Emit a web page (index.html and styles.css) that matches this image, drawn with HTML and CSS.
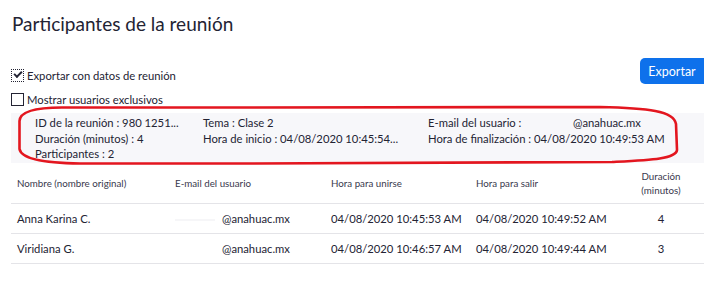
FILE: index.html
```html
<!DOCTYPE html>
<html lang="es">

<head>
    <meta charset="UTF-8">
    <meta name="viewport" content="width=device-width, initial-scale=1.0">
    <title>Participantes de la reunión</title>
    <link rel="stylesheet" href="styles.css">
</head>

<body>
    <div class="page">
        <h1 class="title">Participantes de la reunión</h1>

        <div class="toolbar">
            <div class="options">
                <label class="opt"><span class="box checked"></span>Exportar con datos de reunión</label>
                <label class="opt"><span class="box"></span>Mostrar usuarios exclusivos</label>
            </div>
            <div class="btn">Exportar</div>
        </div>

        <div class="info">
            <div class="info-row">
                <div class="c1">ID de la reunión : 980 1251...</div>
                <div class="c2">Tema : Clase 2</div>
                <div class="c3"><span class="mail-label">E-mail del usuario :</span>@anahuac.mx</div>
            </div>
            <div class="info-row">
                <div class="c1">Duración (minutos) : 4</div>
                <div class="c2">Hora de inicio : 04/08/2020 10:45:54...</div>
                <div class="c3">Hora de finalización : 04/08/2020 10:49:53 AM</div>
            </div>
            <div class="info-row">
                <div class="c1">Participantes : 2</div>
            </div>
        </div>

        <table class="list">
            <thead>
                <tr>
                    <th class="w1">Nombre (nombre original)</th>
                    <th class="w2">E-mail del usuario</th>
                    <th class="w3">Hora para unirse</th>
                    <th class="w4">Hora para salir</th>
                    <th class="w5 center">Duración<br>(minutos)</th>
                </tr>
            </thead>
            <tbody>
                <tr>
                    <td>Anna Karina C.</td>
                    <td><span class="mail-blur"></span>@anahuac.mx</td>
                    <td>04/08/2020 10:45:53 AM</td>
                    <td>04/08/2020 10:49:52 AM</td>
                    <td class="center">4</td>
                </tr>
                <tr>
                    <td>Viridiana G.</td>
                    <td><span class="mail-gap"></span>@anahuac.mx</td>
                    <td>04/08/2020 10:46:57 AM</td>
                    <td>04/08/2020 10:49:44 AM</td>
                    <td class="center">3</td>
                </tr>
            </tbody>
        </table>

        <!-- marca roja a mano sobre los datos -->
        <svg class="mark" width="728" height="283" viewBox="0 0 728 283">
            <path d="M 62 107.5 L 240 107.5 L 600 107 C 648 108, 674 111, 676 124 L 677 150 C 676 159, 650 160, 612 162 L 240 163.5 L 80 163.5 C 42 163, 21 158, 19.5 149 L 19.5 121 C 20 111, 38 107.5, 62 107.5 Z"
                fill="none" stroke="#e3161f" stroke-width="2.6" stroke-linejoin="round" />
        </svg>
    </div>
</body>

</html>
```

FILE: styles.css
```css
body {
    margin: 0;
    font-family: Lato, "Open Sans", sans-serif;
    color: #232333;
    background-color: white;
}

.page {
    padding: 0 24px 0 11px;
}

.title {
    margin: 0;
    padding: 12px 0 0 1px;
    font-size: 19px;
    font-weight: normal;
    line-height: 24px;
}

.toolbar {
    margin-top: 22px;
    display: flex;
    justify-content: space-between;
    align-items: flex-start;
}

.options {
    padding-top: 5px;
    display: flex;
    flex-direction: column;
}

.opt {
    height: 24px;
    display: flex;
    align-items: center;
    font-size: 11.25px;
}

.box {
    width: 11px;
    height: 11px;
    border: 1px solid #232333;
    margin-right: 3px;
    position: relative;
}

.box.checked {
    border-style: dotted;
}

.box.checked::after {
    content: "";
    position: absolute;
    left: 2px;
    top: 1px;
    width: 6px;
    height: 3px;
    border-left: 2px solid #232333;
    border-bottom: 2px solid #232333;
    transform: rotate(-45deg);
}

.btn {
    width: 64px;
    height: 26px;
    border-radius: 5px 0 0 5px;
    background-color: #0e71eb;
    color: white;
    font-size: 12.5px;
    display: flex;
    justify-content: center;
    align-items: center;
}

.info {
    margin-top: 2px;
    padding: 2px 0 1px 24px;
    background-color: #f7f7fa;
    font-size: 11.25px;
    line-height: 15.5px;
    white-space: nowrap;
}

.info-row {
    display: flex;
}

.c1 {
    width: 168px;
}

.c2 {
    width: 225px;
}

.mail-label {
    display: inline-block;
    width: 145px;
}

.list {
    width: 100%;
    border-collapse: collapse;
    font-size: 11.25px;
    white-space: nowrap;
}

.list th {
    height: 40px;
    padding: 0 6px;
    text-align: left;
    font-weight: normal;
    font-size: 9.75px;
    line-height: 14px;
    color: #39394d;
    border-bottom: 1px solid #e4e4e8;
}

.list td {
    height: 29px;
    padding: 0 6px;
    border-bottom: 1px solid #e4e4e8;
}

.w1 {
    width: 146px;
}

.w2 {
    width: 144px;
}

.w3 {
    width: 133px;
}

.w4 {
    width: 136px;
}

.center {
    text-align: center;
}

.list th.center {
    text-align: center;
}

.mail-blur {
    display: inline-block;
    width: 40px;
    height: 2px;
    margin-right: 7px;
    vertical-align: middle;
    background-color: #f6f6f8;
}

.mail-gap {
    display: inline-block;
    width: 47px;
}

.mark {
    position: absolute;
    left: 0;
    top: 0;
    pointer-events: none;
}
```
